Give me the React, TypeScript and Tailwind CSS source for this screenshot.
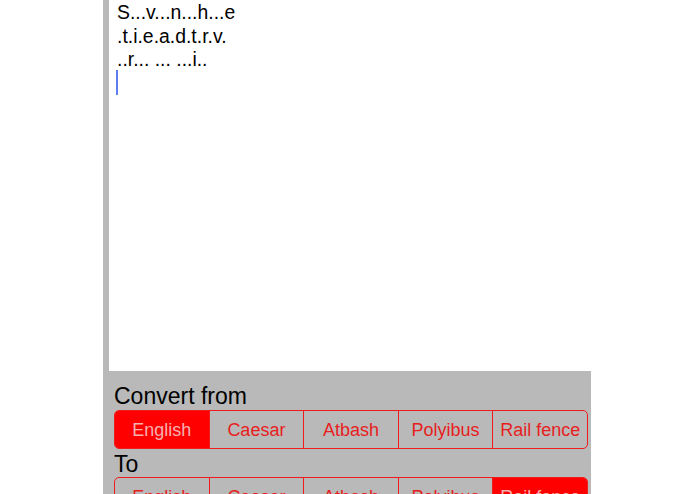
const ciphers = ["English", "Caesar", "Atbash", "Polyibus", "Rail fence"];

function Segmented({ selected }: { selected: number }) {
  return (
    <div className="flex h-[39px] w-[474px] shrink-0 overflow-hidden rounded-[5px] border border-[#f01c1c]">
      {ciphers.map((name, i) => (
        <div
          key={name}
          className={
            "flex flex-1 items-center justify-center pt-[2px] text-[18px] " +
            (i > 0 ? "border-l border-[#f01c1c] " : "") +
            (i === selected ? "bg-[#ff0000] text-[#f5b0b0]" : "text-[#e81e1e]")
          }
        >
          {name}
        </div>
      ))}
    </div>
  );
}

export default function App() {
  return (
    <div className="h-[494px] w-[695px] overflow-hidden bg-white font-['Liberation_Sans',Arial,sans-serif]">
      <div className="ml-[103px] flex h-full w-[488px] flex-col bg-[#b9b9b9]">
        <div className="ml-[6px] h-[371px] shrink-0 bg-white pl-[8px] pt-[1px] text-[19.4px] leading-[23.5px] text-black">
          <div>S...v...n...h...e</div>
          <div>.t.i.e.a.d.t.r.v.</div>
          <div>..r... ... ...i..</div>
          <div className="ml-[-1px] mt-[-2px] h-[25px] w-[2px] bg-[#5d7ff2]" />
        </div>
        <div className="flex flex-col pl-[11px]">
          <div className="mt-[12px] h-[27px] text-[23px] leading-[27px] text-black">Convert from</div>
          <Segmented selected={0} />
          <div className="mt-[2px] h-[26px] text-[23px] leading-[26px] text-black">To</div>
          <Segmented selected={4} />
        </div>
      </div>
    </div>
  );
}
